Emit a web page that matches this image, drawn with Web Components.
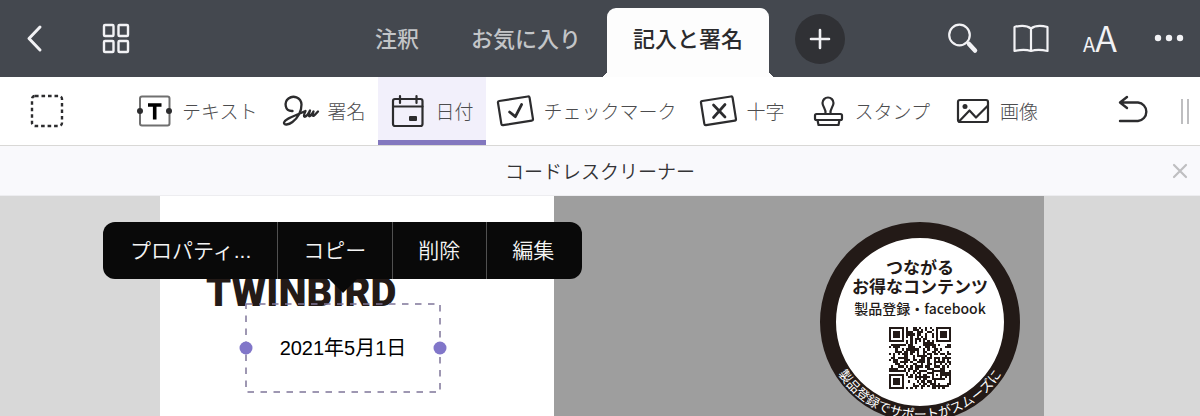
<!DOCTYPE html>
<html lang="ja">
<head>
<meta charset="utf-8">
<meta name="viewport" content="width=device-width, initial-scale=1">
<title>コードレスクリーナー</title>
<style>
  html, body { height: 100%; }
  body {
    margin: 0;
    overflow: hidden;
    font-family: "Noto Sans CJK JP", "Liberation Sans", sans-serif;
  }
</style>
</head>
<body>
<pdf-app></pdf-app>

<script>
const icons = {
  back: [50, 50, '<path d="M31 14 20 25.500 31 37" stroke-width="3"/>'],
  pages: [50, 50, '<g stroke-width="2.400"><rect x="13" y="12" width="9.500" height="11" rx="1"/><rect x="27.500" y="12" width="9.500" height="11" rx="1"/><rect x="13" y="28" width="9.500" height="11" rx="1"/><rect x="27.500" y="28" width="9.500" height="11" rx="1"/></g>'],
  plus: [50, 50, '<path d="M25 16v18M16 25h18" stroke-width="2.600"/>'],
  search: [50, 50, '<circle cx="22.500" cy="22" r="10.300" stroke-width="2.200"/><path d="m32 31 6 6.500" stroke-width="4.500"/>'],
  book: [50, 50, '<path d="M25 15.500c-4-3-11-3-16.500-1.500v24c6-1.500 12-1.500 16.500 0 4.500-1.500 10.500-1.500 16.500 0V14C36 12.500 29 12.500 25 15.500zV38" stroke-width="2.200"/>'],
  more: [50, 50, '<g fill="currentColor" stroke="none"><circle cx="14" cy="25" r="3.200"/><circle cx="25" cy="25" r="3.200"/><circle cx="36" cy="25" r="3.200"/></g>'],
  select: [34, 34, '<rect x="2" y="2" width="30" height="30" rx="3" stroke-width="2.400" stroke-linecap="butt" stroke-dasharray="3.600 2.900"/>'],
  text: [34, 34, '<rect x="2" y="2.500" width="29.500" height="29" rx="2" stroke="#707070" stroke-width="2"/><circle cx="2" cy="17" r="3" fill="currentColor" stroke="none"/><circle cx="31" cy="17" r="3" fill="currentColor" stroke="none"/><path d="M10 11h13.500M16.700 11v14.500" stroke="#000" stroke-width="3.600" stroke-linecap="butt"/>'],
  sign: [34, 34, '<path d="M9.500 17C1.500 17.500 1 8 5.500 4.500c4.500-3.500 12.500-1.500 13 6 .200 7-4 14-9 17.500-4 3-9 3.500-8.500.500C2 24.500 12 22 22.500 17c-2 4-2 6.500 0 5.500s3.500-4 4.500-6c-1.500 4-1.500 6.500 0 5.500s2.500-3 3.500-4.500c-1 3-1 5 .300 4.200s2.200-2 4.200-4.200" stroke-width="2.300"/>'],
  date: [34, 34, '<rect x="2" y="5" width="29.500" height="27" rx="2" stroke-width="2.200"/><path d="M2 12.500h29.500M9 2v7M25.500 2v7" stroke-width="2.200"/><rect x="18" y="22" width="8" height="5" rx="1" fill="currentColor" stroke="none"/>'],
  check: [34, 34, '<g transform="rotate(-9 17 17)"><rect x=".5" y="4.500" width="32" height="24.500" rx="1.500" stroke-width="2.200"/><path d="m10.500 17 5 5.500 8-11" stroke-width="2.800"/></g>'],
  cross: [34, 34, '<g transform="rotate(-9 17 17)"><rect x=".5" y="4.500" width="32" height="24.500" rx="1.500" stroke-width="2.200"/></g><path d="m11.500 11 11.500 12M23 10.500 11.500 23.500" stroke-width="2.700"/>'],
  stamp: [34, 34, '<path d="M14.500 20c1-5-3-7-3-11a5.500 5.500 0 0 1 11 0c0 4-4 6-3 11" stroke-width="2.200"/><rect x="4" y="20" width="27" height="6" rx="1.500" stroke-width="2.200"/><path d="m6.500 26 1 5h20l1-5" stroke-width="2.200"/>'],
  image: [34, 34, '<rect x="2" y="6" width="30" height="22" rx="2" stroke-width="2.200"/><circle cx="9" cy="12.500" r="2.500" fill="currentColor" stroke="none"/><path d="m3 27.500 10.500-11 6.500 7L31.500 12" stroke-width="2.200"/>'],
  undo: [34, 34, '<path d="m10 3-7 5.500 7 5.500M3.500 8.500H21a9.300 9.300 0 0 1 0 18.500H3" stroke-width="2.400"/>'],
  close: [16, 16, '<path d="m2 2 12 12M14 2 2 14" stroke-width="2.200"/>']
}

class UiIcon extends HTMLElement{
  connectedCallback(){
    const [w, h, body] = icons[this.getAttribute('name')]
    if(!this.shadowRoot) this.attachShadow({ mode: 'open' })
    this.shadowRoot.innerHTML = `
    <style>
      :host { display: block; flex: none; }
      svg { display: block; overflow: visible; fill: none; stroke: currentColor; stroke-linecap: round; stroke-linejoin: round; }
    </style>
    <svg width="${w}" height="${h}" viewBox="0 0 ${w} ${h}" aria-hidden="true">${body}</svg>`
  }
}
customElements.define('ui-icon', UiIcon)

// attaches a shadow root cloned from the template string
function define(name, html, setup){
  const tpl = document.createElement('template')
  tpl.innerHTML = html
  customElements.define(name, class extends HTMLElement{
    constructor(){
      super()
      this.attachShadow({ mode: 'open' })
      this.shadowRoot.appendChild(tpl.content.cloneNode(true))
    }
    connectedCallback(){
      if(setup) setup(this, this.shadowRoot)
    }
  })
}

define('icon-button', `
<style>
  :host { display: block; flex: none; }
  button {
    display: flex;
    align-items: center;
    justify-content: center;
    width: 50px;
    height: 50px;
    padding: 0;
    border: none;
    border-radius: 50%;
    background: var(--button-bg, none);
    color: inherit;
    font: inherit;
    cursor: pointer;
  }
</style>
<button type="button"><slot></slot></button>`, (host, root)=>{
  root.querySelector('button').setAttribute('aria-label', host.getAttribute('label'))
})

define('nav-tab', `
<style>
  :host { display: block; position: relative; color: #c3c5c8; }
  button {
    height: 100%;
    padding: 0 26px 12px;
    border: none;
    border-radius: 9px 9px 0 0;
    background: none;
    color: inherit;
    font: inherit;
    font-size: 22px;
    font-weight: 500;
    line-height: 32px;
    white-space: nowrap;
    cursor: pointer;
  }
  :host([selected]) { color: #2b2b2d; }
  :host([selected]) button { background: #fdfdfd; }
  :host([selected])::before, :host([selected])::after {
    content: "";
    position: absolute;
    bottom: 0;
    width: 7px;
    height: 7px;
  }
  :host([selected])::before { right: 100%; background: radial-gradient(circle at 0 0, transparent 7px, #fdfdfd 7px); }
  :host([selected])::after { left: 100%; background: radial-gradient(circle at 100% 0, transparent 7px, #fdfdfd 7px); }
</style>
<button type="button" role="tab"><slot></slot></button>`, (host, root)=>{
  root.querySelector('button').setAttribute('aria-selected', host.hasAttribute('selected'))
})

define('app-header', `
<style>
  :host {
    display: grid;
    grid-template-columns: 1fr auto 1fr;
    height: 77px;
    padding-right: 6px;
    box-sizing: border-box;
    background: #44484f;
    color: #f2f2f5;
  }
  .side { display: flex; align-items: center; gap: 32px; padding: 0 0 2px 9px; }
  .end { justify-content: flex-end; gap: 19px; padding-left: 0; }
  .tabs { display: flex; padding-top: 8px; }
  .add { align-self: center; margin: -8px 0 0 26px; --button-bg: #303135; }
  .aa { line-height: 40px; padding-top: 4px; font-size: 36px; font-weight: 350; }
  .aa small { font-size: 20px; font-weight: 400; }
</style>
<div class="side">
  <icon-button label="戻る"><ui-icon name="back"></ui-icon></icon-button>
  <icon-button label="ページ一覧"><ui-icon name="pages"></ui-icon></icon-button>
</div>
<div class="tabs" role="tablist">
  <nav-tab>注釈</nav-tab>
  <nav-tab>お気に入り</nav-tab>
  <nav-tab selected>記入と署名</nav-tab>
  <icon-button class="add" label="追加"><ui-icon name="plus"></ui-icon></icon-button>
</div>
<div class="side end">
  <icon-button label="検索"><ui-icon name="search"></ui-icon></icon-button>
  <icon-button label="閲覧"><ui-icon name="book"></ui-icon></icon-button>
  <icon-button label="文字サイズ"><span class="aa"><small>A</small>A</span></icon-button>
  <icon-button label="その他"><ui-icon name="more"></ui-icon></icon-button>
</div>`)

define('tool-item', `
<style>
  :host { display: block; }
  button {
    display: flex;
    align-items: center;
    gap: 10px;
    height: 100%;
    padding: 0 13px;
    border: none;
    background: none;
    color: #2c2c2e;
    font: inherit;
    font-size: 19px;
    font-weight: 300;
    line-height: 28px;
    white-space: nowrap;
    cursor: pointer;
  }
  .label { color: #4c4c4e; }
  :host([active]) button { background: #f2f0fb; box-shadow: inset 0 -5px #8378bf; }
</style>
<button type="button"><span class="label"><slot></slot></span></button>`, (host, root)=>{
  const button = root.querySelector('button')
  const icon = document.createElement('ui-icon')
  icon.setAttribute('name', host.getAttribute('icon'))
  button.prepend(icon)
  button.setAttribute('aria-pressed', host.hasAttribute('active'))
})

define('tool-bar', `
<style>
  :host {
    display: flex;
    align-items: center;
    height: 68px;
    padding: 0 11px 0 22px;
    border-bottom: 1px solid #d9d8d6;
    background: #fff;
    color: #2c2c2e;
  }
  .tools { display: flex; align-self: stretch; margin: 0 auto 0 53px; }
  .grip { width: 4px; height: 25px; margin-left: 22px; border: solid #bebec0; border-width: 0 2px; }
</style>
<icon-button label="選択"><ui-icon name="select"></ui-icon></icon-button>
<div class="tools">
  <tool-item icon="text">テキスト</tool-item>
  <tool-item icon="sign">署名</tool-item>
  <tool-item icon="date" active>日付</tool-item>
  <tool-item icon="check">チェックマーク</tool-item>
  <tool-item icon="cross">十字</tool-item>
  <tool-item icon="stamp">スタンプ</tool-item>
  <tool-item icon="image">画像</tool-item>
</div>
<icon-button label="元に戻す"><ui-icon name="undo"></ui-icon></icon-button>
<div class="grip"></div>`)

define('document-tab', `
<style>
  :host {
    display: grid;
    grid-template-columns: 40px 1fr 40px;
    align-items: center;
    justify-items: center;
    height: 49px;
    border-bottom: 1px solid #ededf0;
    background: #f9f9fc;
  }
  .title {
    grid-column: 2;
    color: #333335;
    font-size: 19px;
    line-height: 28px;
    font-weight: 350;
  }
  icon-button { color: #bfbfc1; }
</style>
<span class="title"><slot></slot></span>
<icon-button label="閉じる"><ui-icon name="close"></ui-icon></icon-button>`)

define('popover-menu', `
<style>
  :host {
    display: flex;
    height: 57px;
    padding: 0 2px 0 1px;
    border-radius: 12px;
    background: #090909;
  }
  :host::after {
    content: "";
    position: absolute;
    top: 100%;
    left: 50%;
    margin-left: -14px;
    border: 14px solid transparent;
    border-top-color: #090909;
    border-bottom: none;
  }
  ::slotted(button) {
    padding: 0 26px;
    border: none;
    background: none;
    color: #f5f5f5;
    font: 350 21px/30px "Liberation Sans", "Noto Sans CJK JP", sans-serif;
    white-space: nowrap;
    cursor: pointer;
  }
  ::slotted(button:not(:first-child)) { box-shadow: inset 1px 0 #505050; }
</style>
<slot></slot>`)

define('date-field', `
<style>
  :host {
    display: flex;
    align-items: center;
    justify-content: center;
    width: 196px;
    height: 90px;
    font: 20px/24px "Liberation Sans", "Noto Sans CJK JP", sans-serif;
    color: #000;
  }
  svg { position: absolute; inset: 0; width: 100%; height: 100%; overflow: visible; }
  rect { fill: none; stroke: #7f7599; stroke-width: 1.500; stroke-dasharray: 6.500 6.500; }
  circle { fill: #8176c9; }
</style>
<svg aria-hidden="true">
  <rect x="1" y="1" width="194" height="88"/>
  <circle cx="1" cy="45" r="6.500"/>
  <circle cx="195" cy="45" r="6.500"/>
</svg>
<slot></slot>`)

// 29x29 matrix: three finder marks, one alignment mark, timing lines, data cells
function qrPath(){
  const n = 29
  let seed = 20210501
  let d = ''
  const ring = (x, y, cx, cy)=> Math.max(Math.abs(x - cx), Math.abs(y - cy))
  for(let y = 0; y < n; y++){
    for(let x = 0; x < n; x++){
      seed = (seed * 1103515245 + 12345) % 2147483648
      let on = seed / 2147483648 > 0.48
      if(x == 6 || y == 6) on = (x + y) % 2 == 0
      if(ring(x, y, 22, 22) <= 2) on = ring(x, y, 22, 22) != 1
      for(const [cx, cy] of [[3, 3], [25, 3], [3, 25]]){
        const r = ring(x, y, cx, cy)
        if(r <= 4) on = r != 2 && r != 4
      }
      if(on) d += `M${x} ${y}h1v1h-1z`
    }
  }
  return d
}

define('product-badge', `
<style>
  :host {
    display: flex;
    flex-direction: column;
    align-items: center;
    width: 200px;
    height: 200px;
    box-sizing: border-box;
    padding-top: 19px;
    border: 16px solid #231a17;
    border-radius: 50%;
    background: #fff;
    color: #231a17;
    white-space: nowrap;
  }
  .lead { font-size: 17px; line-height: 19px; font-weight: 700; text-align: center; }
  .sub { margin-top: 3px; font-size: 14px; line-height: 20px; font-weight: 500; }
  .qr { width: 62px; height: 62px; margin-top: 9px; fill: #231a17; }
  .arc { position: absolute; top: -16px; left: -16px; width: 200px; height: 200px; overflow: visible; }
  .arc text { fill: #fff; font-size: 13px; }
</style>
<div class="lead">つながる<br>お得なコンテンツ</div>
<div class="sub">製品登録・facebook</div>
<svg class="qr" viewBox="0 0 29 29" shape-rendering="crispEdges" role="img" aria-label="QRコード"><path/></svg>
<svg class="arc" viewBox="0 0 200 200">
  <path id="rim" d="M3 100A97 97 0 0 0 197 100" fill="none"/>
  <text text-anchor="middle"><textPath href="#rim" startOffset="50%">製品登録でサポートがスムーズに</textPath></text>
</svg>`, (host, root)=>{
  root.querySelector('.qr path').setAttribute('d', qrPath())
})

define('pdf-canvas', `
<style>
  :host {
    display: block;
    padding: 0 156px 0 160px;
    background: #d8d8d8;
  }
  .page {
    display: grid;
    grid-template-columns: 394fr 490fr;
    height: 100%;
  }
  .front { position: relative; background: #fff; }
  .back { position: relative; background: #9e9e9e; }
  .brand {
    margin: 71px 0 0 46px;
    color: #231a17;
    font: 900 40px/52px Roboto, "Liberation Sans", sans-serif;
  }
  /* annotations sit freely on the page */
  date-field { position: absolute; left: 85px; top: 107px; }
  popover-menu { position: absolute; left: -57px; top: 26px; z-index: 1; }
  product-badge { position: absolute; left: 266px; top: 26px; }
</style>
<div class="page">
  <div class="front">
    <div class="brand">TWINBIRD</div>
    <date-field>2021年5月1日</date-field>
    <popover-menu role="menu">
      <button type="button">プロパティ...</button>
      <button type="button">コピー</button>
      <button type="button">削除</button>
      <button type="button">編集</button>
    </popover-menu>
  </div>
  <div class="back"><product-badge></product-badge></div>
</div>`)

define('pdf-app', `
<style>
  :host { display: flex; flex-direction: column; height: 100%; }
  app-header, tool-bar, document-tab { flex: none; }
  pdf-canvas { flex: 1; min-height: 0; overflow: hidden; }
</style>
<app-header></app-header>
<tool-bar></tool-bar>
<document-tab>コードレスクリーナー</document-tab>
<pdf-canvas></pdf-canvas>`)
</script>
</body>
</html>
